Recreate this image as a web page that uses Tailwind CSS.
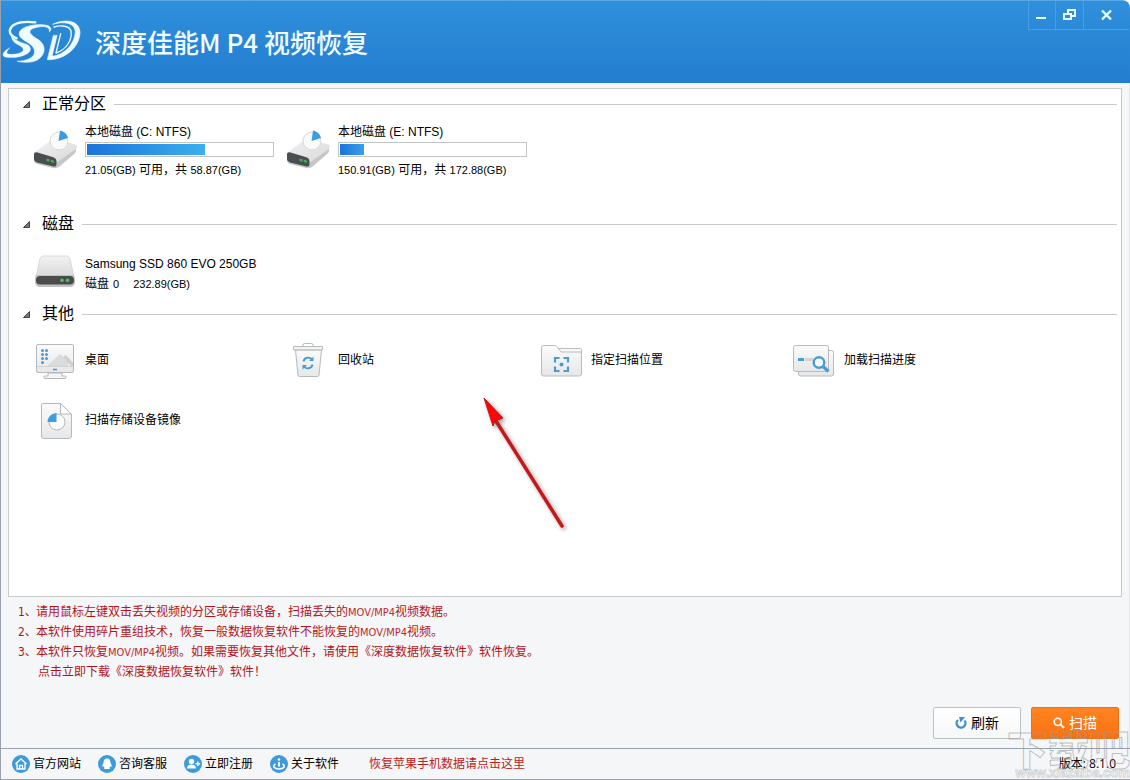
<!DOCTYPE html>
<html lang="zh-CN">
<head>
<meta charset="utf-8">
<meta name="viewport" content="width=device-width, initial-scale=1">
<title>深度佳能MP4视频恢复</title>
<script src="https://cdn.jsdelivr.net/npm/@tailwindcss/browser@4"></script>
</head>
<body class="bg-white">
<svg class="absolute size-0" aria-hidden="true">
  <defs>
    <linearGradient id="gl" x1="0" y1="0" x2="0" y2="1"><stop offset="0" stop-color="#fbfbfb"/><stop offset="1" stop-color="#e6e7e8"/></linearGradient>
    <linearGradient id="gm" x1="0" y1="0" x2="1" y2="1"><stop offset="0" stop-color="#f2f2f2"/><stop offset="1" stop-color="#d9d9d9"/></linearGradient>
    <linearGradient id="gd" x1="0" y1="0" x2="0" y2="1"><stop offset="0" stop-color="#f3f3f3"/><stop offset="1" stop-color="#d6d6d6"/></linearGradient>
    <symbol id="drive" viewBox="0 0 44 40">
      <path d="M1 25v6c0 2 1 3 3 4l16 4c2 .5 4 0 6-1l15-13c1.500-1 2-2 2-4v-4z" fill="#c6c6c6"/>
      <path d="M2 23 17 12c2-1.500 4-2 7-1.200l17 4.200c3 1 4 3 2 5L26 32c-1.500 1.200-3 1.500-5 1L4 27c-3-1-4-2-2-4z" fill="url(#gm)"/>
      <path d="M1 25.500c0-2 1.500-2.700 3.500-2l15 4.500c3 1 4 2 4 5v1.500c0 3-1.300 3.500-4 2.800L4 33.500c-2-.7-3-2-3-3.500z" fill="#4b4e50"/>
      <path d="M13.500 29.500l3 .8v2.400l-3-.8zM17.800 30.700l3 .8v2.400l-3-.8z" fill="#45b34c"/>
      <circle cx="26" cy="12" r="9" fill="#fafafa" stroke="#d8d8d8"/>
      <path d="m25.500 12 1.500-10.500a10 10 0 0 1 8 7.500z" fill="#3d9bdf"/>
    </symbol>
  </defs>
</svg>
<div class="relative flex min-h-screen flex-col overflow-hidden rounded-tr-lg border-b border-l border-gray-400 bg-[#f5f6f8] font-['Liberation_Sans','Noto_Sans_CJK_SC',sans-serif] text-xs text-black">

  <header class="flex h-[83px] shrink-0 justify-between border-t border-[#58a6e3] bg-linear-to-b from-[#2f90dc] to-[#237dd0]">
    <div class="flex items-center gap-3">
      <svg class="h-[46px] w-[82px]" viewBox="3 56 246 138" fill="#eefcff" stroke="#eefcff" stroke-linejoin="round" stroke-linecap="round" role="img" aria-label="SD">
        <path d="M106 66C70 62 38 66 30 88C27 102 38 108 50 114" fill="none" stroke-width="7"/>
        <path d="M34 106C48 124 66 126 80 132C96 140 94 152 82 160C62 172 34 174 15 170C2 166 12 150 30 142C21 151 16 160 26 161C42 163 60 161 68 153C74 144 64 139 56 134C42 127 34 118 34 106Z" stroke-width="1"/>
        <path d="M149 93C150 80 134 76 114 80C98 83 88 88 90 97C94 106 106 112 118 120C140 138 136 166 110 180C96 187 72 187 52 183C78 182 98 174 103 160C108 142 92 132 76 122C60 112 52 102 62 90C76 73 128 69 146 77C154 82 154 89 149 93Z" stroke-width="2"/>
        <path d="M160 106L142 178C188 180 236 148 240 98C240 60 196 54 158 72C190 62 224 66 226 94C224 134 190 164 156 168L171 106Z" stroke-width="2"/>
        <path d="M182 100L168 158C200 148 218 116 213 92C208 76 184 74 162 80" fill="none" stroke-width="4"/>
      </svg>
      <h1 class="font-['Noto_Sans_CJK_SC',sans-serif] text-[26px] font-medium leading-8 text-[#f0fcff]">深度佳能M P4 视频恢复</h1>
    </div>
    <div class="mr-px flex h-[29px] border-b border-l border-[#4a9fe2] text-[#e8fffa]">
      <button aria-label="最小化" class="flex w-[27px] items-center justify-center border-r border-[#4a9fe2]"><svg class="size-4" viewBox="0 0 16 16" fill="currentColor"><path d="M2 10h10v2H2z"/></svg></button>
      <button aria-label="还原" class="flex w-7 items-center justify-center border-r border-[#4a9fe2]"><svg class="size-4" viewBox="0 0 16 16" fill="none" stroke="currentColor" stroke-width="2"><path d="M6 6V3h7v6h-3M2 7h7v5H2z"/></svg></button>
      <button aria-label="关闭" class="flex w-[45px] items-center justify-center"><svg class="size-4" viewBox="0 0 16 16" fill="none" stroke="currentColor" stroke-width="2.400"><path d="m3 3.500 9 9m0-9-9 9"/></svg></button>
    </div>
  </header>

  <main class="flex flex-1 flex-col border-r border-gray-200 px-[7px] pt-[5px]">
    <div class="flex-1 border border-[#c8cacc] bg-white pr-1">
      <section>
        <h2 class="flex h-[30px] items-center pl-3.5 text-base leading-5"><svg class="mr-3 size-[7px]" viewBox="0 0 7 7"><path d="M6.500 .5v6h-6z" fill="#777" stroke="#444"/></svg>正常分区<span class="ml-2 h-px flex-1 bg-[#c9c9c9]"></span></h2>
        <div class="grid h-[90px] grid-cols-[repeat(4,253px)] pl-6 pt-[3px]">
          <a href="#" class="flex h-16 gap-2">
            <svg class="mt-[7px] h-10 w-11"><use href="#drive"/></svg>
            <span class="block w-[189px]">
              <span class="block leading-5">本地磁盘 (C: NTFS)</span>
              <span class="block h-[15px] border border-[#c4c4c4] bg-white p-px"><span class="block h-full bg-linear-to-r from-[#1d73d9] to-[#3bb0ee]" style="width:64%"></span></span>
              <span class="mt-[3px] block leading-5"><span class="text-[11px]">21.05(GB)</span> 可用，共 <span class="text-[11px]">58.87(GB)</span></span>
            </span>
          </a>
          <a href="#" class="flex h-16 gap-2">
            <svg class="mt-[7px] h-10 w-11"><use href="#drive"/></svg>
            <span class="block w-[189px]">
              <span class="block leading-5">本地磁盘 (E: NTFS)</span>
              <span class="block h-[15px] border border-[#c4c4c4] bg-white p-px"><span class="block h-full bg-linear-to-r from-[#1d73d9] to-[#3b9eea]" style="width:13%"></span></span>
              <span class="mt-[3px] block leading-5"><span class="text-[11px]">150.91(GB)</span> 可用，共 <span class="text-[11px]">172.88(GB)</span></span>
            </span>
          </a>
        </div>
      </section>

      <section>
        <h2 class="flex h-[30px] items-center pl-3.5 text-base leading-5"><svg class="mr-3 size-[7px]" viewBox="0 0 7 7"><path d="M6.500 .5v6h-6z" fill="#777" stroke="#444"/></svg>磁盘<span class="ml-2 h-px flex-1 bg-[#c9c9c9]"></span></h2>
        <div class="h-[60px] pl-6 pt-3.5">
          <a href="#" class="flex gap-2">
            <svg class="h-10 w-11" viewBox="0 0 44 40">
              <path d="M7 6c.5-2 2-3 4-3h22c2 0 3.500 1 4 3l4.500 20h-39z" fill="url(#gd)" stroke="#d9d9d9"/>
              <path d="M3 22h38l1 5v2c0 3-2 5-5 5H7c-3 0-5-2-5-5v-2z" fill="#c2c2c2"/>
              <rect x="3" y="23" width="38" height="8.500" rx="4" fill="#4b4b4b"/>
              <circle cx="29" cy="27.300" r="1.700" fill="#4fc65a"/><circle cx="34.500" cy="27.300" r="1.700" fill="#4fc65a"/>
            </svg>
            <span class="pt-px leading-5"><span class="block">Samsung SSD 860 EVO 250GB</span><span class="flex"><span>磁盘</span><span class="ml-1 mr-3.5 text-[11px] leading-5">0</span><span class="text-[11px] leading-5">232.89(GB)</span></span></span>
          </a>
        </div>
      </section>

      <section>
        <h2 class="flex h-[30px] items-center pl-3.5 text-base leading-5"><svg class="mr-3 size-[7px]" viewBox="0 0 7 7"><path d="M6.500 .5v6h-6z" fill="#777" stroke="#444"/></svg>其他<span class="ml-2 h-px flex-1 bg-[#c9c9c9]"></span></h2>
        <div class="grid auto-rows-[60px] grid-cols-[repeat(4,253px)] pl-6 pt-px">
          <a href="#" class="flex items-center gap-2">
            <svg class="h-10 w-11" viewBox="0 0 44 40" stroke="#b5b9bc">
              <path d="M15 33v3h-3.500q-.5 0-.5.500v1q0 1 1 1h20q1 0 1-1v-1q0-.5-.5-.5H29v-3z" fill="#f4f4f4"/>
              <rect x="3.500" y="4.500" width="37" height="28" rx="1.500" fill="url(#gl)"/>
              <path d="M14 26 27 14l8 7v5z" fill="#dadbdd" stroke="none"/><path d="m30 17 3-2 7 8v3h-2z" fill="#cfd0d2" stroke="none"/>
              <path d="M4 26.500h36" stroke="#cfd1d3"/>
              <path d="M20 29.500h4" stroke="#4a9bd3" stroke-width="1.500"/>
              <g fill="#4a9bd3" stroke="none"><circle cx="9.500" cy="10.500" r="1.500"/><circle cx="13.500" cy="10.500" r="1.500"/><circle cx="9.500" cy="14.500" r="1.500"/><circle cx="13.500" cy="14.500" r="1.500"/><circle cx="9.500" cy="18.500" r="1.500"/><circle cx="13.500" cy="18.500" r="1.500"/><circle cx="9.500" cy="22.500" r="1.500"/></g>
            </svg>桌面</a>
          <a href="#" class="flex items-center gap-2">
            <svg class="h-10 w-11" viewBox="0 0 44 40" fill="url(#gl)" stroke="#b5b9bc">
              <path d="M17 6.500V5q0-1.500 1.500-1.500h7Q27 3.500 27 5v1.500" fill="none"/>
              <path d="M9.500 10h26l-2.500 25q-.2 1.500-1.500 1.500h-18q-1.300 0-1.500-1.500z"/><rect x="7.500" y="6.500" width="29" height="3.500" rx=".5"/>
              <g fill="none" stroke="#4a9bd3" stroke-width="1.900"><path d="M17.500 21.500a4.800 4.800 0 0 1 8.500-2"/><path d="M26.500 24.500a4.800 4.800 0 0 1-8.500 2"/></g>
              <path d="M27.500 16.500v4.500h-4.500zM16.500 29.500V25H21z" fill="#4a9bd3" stroke="none"/>
            </svg>回收站</a>
          <a href="#" class="flex items-center gap-2">
            <svg class="h-10 w-11" viewBox="-1 -1 44 40" fill="url(#gl)" stroke="#b9bcbf">
              <path d="M16 7.500h24.500q1 0 1 1V20H16z"/>
              <path d="M1.500 6.500q0-2 2-2h11c1.500 0 2.500 1 3.500 2.500l3 4h19q1.500 0 1.500 1.500V33q0 2-2 2H3.500q-2 0-2-2z"/>
              <g fill="none" stroke="#4a9bd3" stroke-width="2.200"><path d="M15 21.500V17h4.500M23.500 17H28v4.500M28 25.500V30h-4.500M19.500 30H15v-4.500"/></g><circle cx="21.500" cy="23.500" r="2" fill="#4a9bd3" stroke="none"/>
            </svg>指定扫描位置</a>
          <a href="#" class="flex items-center gap-2">
            <svg class="h-10 w-11" viewBox="0 0 44 40" fill="url(#gl)" stroke="#b9bcbf">
              <path d="M6.500 10.500h33q2 0 2 2V34q0 2-2 2h-31q-2 0-2-2z"/>
              <rect x="1.500" y="5.500" width="35" height="26" rx="2"/>
              <path d="M13 19.500h8" stroke="#d4d5d6" stroke-width="3"/><path d="M6 19.500h6" stroke="#4a9bd3" stroke-width="3"/>
              <circle cx="27" cy="22.500" r="5.300" fill="#f5fafd" stroke="#4a9bd3" stroke-width="2.400"/><path d="m31 26.500 5.500 5" stroke="#4a9bd3" stroke-width="3.200"/>
            </svg>加载扫描进度</a>
          <a href="#" class="flex items-center gap-2">
            <svg class="h-10 w-11" viewBox="0 0 44 40" fill="url(#gl)" stroke="#b5b9bc">
              <path d="M9.500 3.500h18l11 11V36q0 2.500-2.500 2.500H11q-2.500 0-2.500-2.500V5q0-1.500 1-1.500z"/>
              <path d="M27.500 3.500V14h11z" fill="#fff"/>
              <circle cx="24" cy="22" r="8" fill="#fdfdfd"/><path d="M23.500 22v-9a9 9 0 0 0-9 9z" fill="#3d9bdf" stroke="none"/>
            </svg>扫描存储设备镜像</a>
        </div>
      </section>
    </div>

    <div class="mt-[5px] pl-2.5 text-[#b3141b]">
      <p class="flex h-5 items-center"><span class="w-[18px] font-['DejaVu_Sans_Condensed','Noto_Sans_CJK_SC',sans-serif]">1、</span><span>请用鼠标左键双击丢失视频的分区或存储设备，扫描丢失的<span class="font-['DejaVu_Sans_Condensed',sans-serif] text-[11px] text-[#c0282e]">MOV/MP4</span>视频数据。</span></p>
      <p class="flex h-5 items-center"><span class="w-[18px] font-['DejaVu_Sans_Condensed','Noto_Sans_CJK_SC',sans-serif]">2、</span><span>本软件使用碎片重组技术，恢复一般数据恢复软件不能恢复的<span class="font-['DejaVu_Sans_Condensed',sans-serif] text-[11px] text-[#c0282e]">MOV/MP4</span>视频。</span></p>
      <p class="flex h-5 items-center"><span class="w-[18px] font-['DejaVu_Sans_Condensed','Noto_Sans_CJK_SC',sans-serif]">3、</span><span>本软件只恢复<span class="font-['DejaVu_Sans_Condensed',sans-serif] text-[11px] text-[#c0282e]">MOV/MP4</span>视频。如果需要恢复其他文件，请使用《深度数据恢复软件》软件恢复。</span></p>
      <p class="flex h-5 items-center pl-5"><a href="#">点击立即下载《深度数据恢复软件》软件！</a></p>
    </div>

    <div class="mb-[9px] mt-[25px] flex justify-end gap-2.5 pr-[3px] text-sm">
      <button class="flex h-8 w-[88px] items-center justify-center gap-1 rounded-xs border border-[#bfc2c5] bg-linear-to-b from-white to-[#f6f7f8]">
        <svg class="size-3" viewBox="0 0 12 12" fill="none"><path d="M3 3a4.400 4.400 0 1 0 6.500.5" stroke="#3f8fcd" stroke-width="2.300"/><path d="M4 0h6L5.500 5.500z" fill="#3f8fcd"/></svg>刷新</button>
      <button class="flex h-8 w-[88px] items-center justify-center gap-1 rounded-xs border border-[#f0700f] bg-linear-to-b from-[#ff8420] to-[#fb7011] text-white">
        <svg class="size-3" viewBox="0 0 12 12" fill="none" stroke="#fff"><circle cx="4.800" cy="4.800" r="3.600" stroke-width="1.600"/><path d="m7.500 7.500 3.500 3.500" stroke-width="2"/></svg>扫描</button>
    </div>
  </main>

  <footer class="flex h-[31px] shrink-0 items-center border-t border-gray-400 pl-[11px] pr-3.5">
    <nav class="flex gap-[17px]">
      <a href="#" class="flex items-center gap-[3px]"><svg class="size-[18px]" viewBox="0 0 18 18" fill="none" stroke="#fff"><circle cx="9" cy="9" r="9" fill="#3d9bd9" stroke="none"/><path d="m3.500 9 5.500-5 5.500 5M5 8.500V14h8V8.500M7.500 14v-3.500h3V14" stroke-width="1.300"/></svg>官方网站</a>
      <a href="#" class="flex items-center gap-[3px]"><svg class="size-[18px]" viewBox="0 0 18 18" fill="#fff"><circle cx="9" cy="9" r="9" fill="#3d9bd9"/><path d="M9 3.500c2.500 0 3.500 2 3.500 4.500 1 1.500 1.500 3 1 4l-1.300-.8-.7 1.300c1 .8.500 1.500-.5 1.500H7c-1 0-1.500-.7-.5-1.500l-.7-1.300-1.300.8c-.5-1 0-2.500 1-4 0-2.500 1-4.500 3.500-4.500z"/></svg>咨询客服</a>
      <a href="#" class="flex items-center gap-[3px]"><svg class="size-[18px]" viewBox="0 0 18 18" fill="#fff"><circle cx="9" cy="9" r="9" fill="#3d9bd9"/><circle cx="7.500" cy="6.500" r="2.700"/><path d="M3 13.500c0-3 2-4 4.500-4s4.500 1 4.500 4zM11.500 8h1.600V6.400h1.500V8h1.600v1.500h-1.600v1.600h-1.500V9.500h-1.600z"/></svg>立即注册</a>
      <a href="#" class="flex items-center gap-[3px]"><svg class="size-[18px]" viewBox="0 0 18 18" fill="none" stroke="#fff"><circle cx="9" cy="9" r="9" fill="#3d9bd9" stroke="none"/><path d="M9 7v4.500" stroke-width="2"/><circle cx="9" cy="4.500" r="1.200" fill="#fff" stroke="none"/><path d="M5.500 9C2 11 4 14 9 14s7-3 3.500-5" stroke-width="1.500"/></svg>关于软件</a>
    </nav>
    <a href="#" class="ml-[30px] text-[#c01920]">恢复苹果手机数据请点击这里</a>
    <span class="ml-auto font-['Open_Sans','Noto_Sans_CJK_SC',sans-serif]">版本: 8.1.0</span>
  </footer>

  <div class="pointer-events-none absolute bottom-0 right-0 h-[58px]" aria-hidden="true">
    <div class="whitespace-nowrap font-['Noto_Sans_CJK_SC',sans-serif] text-[41px] font-black leading-[52px] text-transparent [-webkit-text-stroke:1px_rgba(150,155,160,0.6)]">下载吧</div>
    <div class="absolute bottom-0 right-0 text-[13px] font-bold leading-3 text-white/80 [-webkit-text-stroke:1px_rgba(150,155,160,0.4)]">www.xiazaiba.com</div>
  </div>

  <svg class="pointer-events-none absolute left-[474px] top-[390px] h-[145px] w-[100px] drop-shadow-[2px_2px_2px_rgba(0,0,0,0.4)]" viewBox="0 0 100 145" aria-hidden="true">
    <path d="M21 31 87 136" stroke="#c4181c" stroke-width="3.500" stroke-linecap="round"/>
    <path d="M9 8 28 28 20 31 18 36z" fill="#f80808" stroke="#c01818"/>
  </svg>
</div>
</body>
</html>
